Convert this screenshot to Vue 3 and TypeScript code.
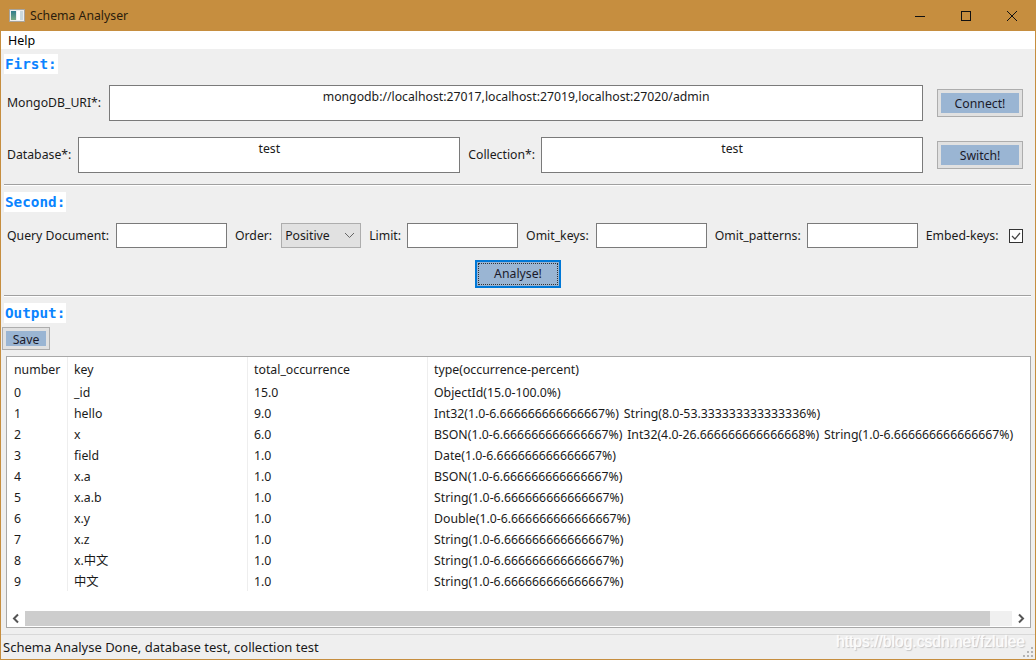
<script setup lang="ts">
interface Row { n: string; k: string; t: string; v: string }
const rows: Row[] = [
  { n: '0', k: '_id', t: '15.0', v: 'ObjectId(15.0-100.0%)' },
  { n: '1', k: 'hello', t: '9.0', v: 'Int32(1.0-6.666666666666667%) String(8.0-53.333333333333336%)' },
  { n: '2', k: 'x', t: '6.0', v: 'BSON(1.0-6.666666666666667%) Int32(4.0-26.666666666666668%) String(1.0-6.666666666666667%)' },
  { n: '3', k: 'field', t: '1.0', v: 'Date(1.0-6.666666666666667%)' },
  { n: '4', k: 'x.a', t: '1.0', v: 'BSON(1.0-6.666666666666667%)' },
  { n: '5', k: 'x.a.b', t: '1.0', v: 'String(1.0-6.666666666666667%)' },
  { n: '6', k: 'x.y', t: '1.0', v: 'Double(1.0-6.666666666666667%)' },
  { n: '7', k: 'x.z', t: '1.0', v: 'String(1.0-6.666666666666667%)' },
  { n: '8', k: 'x.中文', t: '1.0', v: 'String(1.0-6.666666666666667%)' },
  { n: '9', k: '中文', t: '1.0', v: 'String(1.0-6.666666666666667%)' },
]
</script>

<template>
  <div class="window">
    <header class="titlebar">
      <svg class="appicon" width="16" height="13" viewBox="0 0 16 13">
        <defs>
          <linearGradient id="pane" x1="0" y1="0" x2="0" y2="1">
            <stop offset="0" stop-color="#2f7c8c" />
            <stop offset="1" stop-color="#7cab84" />
          </linearGradient>
        </defs>
        <rect x="0.5" y="0.5" width="15" height="12" fill="#eeeeee" stroke="#a8a49c" />
        <rect x="2" y="2" width="5" height="9" fill="url(#pane)" />
        <rect x="8" y="2" width="3" height="9" fill="#ffffff" />
        <rect x="11" y="2" width="3" height="9" fill="#c9d8de" />
      </svg>
      <span class="title">Schema Analyser</span>
      <div class="controls">
        <svg width="46" height="30" viewBox="0 0 46 30"><path d="M18 15.5h10" stroke="#111" fill="none" /></svg>
        <svg width="46" height="30" viewBox="0 0 46 30"><rect x="18.5" y="10.5" width="9" height="9" stroke="#111" fill="none" /></svg>
        <svg width="46" height="30" viewBox="0 0 46 30"><path d="M18 10l10 10M28 10L18 20" stroke="#111" fill="none" /></svg>
      </div>
    </header>
    <nav class="menubar"><span>Help</span></nav>

    <main class="content">
      <div class="heading h-first"><span>First:</span></div>
      <div class="form-row r1">
        <label class="lbl-uri">MongoDB_URI*:</label>
        <div class="tall grow">mongodb://localhost:27017,localhost:27019,localhost:27020/admin</div>
        <button class="btn side">Connect!</button>
      </div>
      <div class="form-row r2">
        <label class="lbl-db">Database*:</label>
        <div class="tall grow">test</div>
        <label class="lbl-col">Collection*:</label>
        <div class="tall grow">test</div>
        <button class="btn side">Switch!</button>
      </div>
      <hr class="sep s1" />

      <div class="heading h-second"><span>Second:</span></div>
      <div class="query-row">
        <label>Query Document:</label><input class="field" />
        <label class="wide">Order:</label>
        <div class="select"><span>Positive</span>
          <svg width="11" height="7" viewBox="0 0 11 7"><path d="M1 1l4.500 4.500L10 1" stroke="#666" fill="none" /></svg>
        </div>
        <label class="tight">Limit:</label><input class="field" />
        <label>Omit_keys:</label><input class="field" />
        <label class="tight">Omit_patterns:</label><input class="field" />
        <label>Embed-keys:</label>
        <div class="check">
          <svg width="14" height="14" viewBox="0 0 14 14"><path d="M3 7l3 3 5-6" stroke="#444" stroke-width="1.200" fill="none" /></svg>
        </div>
      </div>
      <div class="analyse-row">
        <button class="btn analyse"><span>Analyse!</span></button>
      </div>
      <hr class="sep s2" />

      <div class="heading h-output"><span>Output:</span></div>
      <button class="btn save">Save</button>

      <section class="table-box">
        <div class="table-scroll">
          <table>
            <thead>
              <tr><th class="c1">number</th><th class="c2">key</th><th class="c3">total_occurrence</th><th>type(occurrence-percent)</th></tr>
            </thead>
            <tbody>
              <tr v-for="r in rows" :key="r.n">
                <td class="c1">{{ r.n }}</td><td class="c2">{{ r.k }}</td><td class="c3">{{ r.t }}</td><td class="c4">{{ r.v }}</td>
              </tr>
            </tbody>
          </table>
        </div>
        <div class="hscroll">
          <svg class="arrow" width="18" height="15" viewBox="0 0 18 15"><path d="M11 3.500L7 7.500l4 4" stroke="#555" stroke-width="2" fill="none" /></svg>
          <div class="track"><div class="thumb"></div></div>
          <svg class="arrow" width="18" height="15" viewBox="0 0 18 15"><path d="M7 3.500l4 4-4 4" stroke="#555" stroke-width="2" fill="none" /></svg>
        </div>
      </section>
    </main>

    <footer class="statusbar">
      <span>Schema Analyse Done, database test, collection test</span>
      <svg class="grip" width="11" height="11" viewBox="0 0 11 11" fill="#b4b4b4">
        <rect x="8" y="0" width="2" height="2" /><rect x="4" y="4" width="2" height="2" /><rect x="8" y="4" width="2" height="2" />
        <rect x="0" y="8" width="2" height="2" /><rect x="4" y="8" width="2" height="2" /><rect x="8" y="8" width="2" height="2" />
      </svg>
    </footer>
    <div class="watermark">https://blog.csdn.net/fzlulee</div>
  </div>
</template>

<style>
html, body { margin: 0; padding: 0; background: #f0f0f0; }
</style>

<style scoped>
.window {
  position: relative;
  width: 1036px;
  height: 660px;
  box-sizing: border-box;
  border: 1px solid #c68e3f;
  border-top: 0;
  background: #efefef;
  display: flex;
  flex-direction: column;
  overflow: hidden;
  font-family: "Noto Sans", "Noto Sans CJK SC", sans-serif;
  font-size: 12.250px;
  color: #1a1a1a;
}
.titlebar {
  height: 31px;
  flex: none;
  background: #c68e3f;
  display: flex;
  align-items: center;
  padding-left: 8px;
  color: #2a1c0c;
}
.appicon { margin-right: 5px; }
.title { font-size: 12.250px; }
.controls { margin-left: auto; display: flex; }
.controls svg { display: block; }
.menubar {
  height: 18px;
  flex: none;
  background: #fff;
  display: flex;
  align-items: center;
  padding-left: 7px;
  color: #000;
  font-size: 12.500px;
}
.content { flex: 1; display: flex; flex-direction: column; min-height: 0; }
.heading { height: 20px; padding-left: 3px; display: flex; }
.heading span {
  background: #fff;
  color: #0a84ff;
  font-family: "DejaVu Sans Mono", monospace;
  font-weight: 700;
  font-size: 14.300px;
  line-height: 20px;
  padding: 0 1px;
}
.h-first { margin-top: 5px; }
.h-second { margin-top: 6px; }
.h-output { margin-top: 6px; }
.form-row { display: flex; align-items: center; height: 36px; padding-left: 6px; padding-right: 12px; }
.form-row label { padding-bottom: 2px; }
.r1 { margin-top: 11px; }
.r2 { margin-top: 16px; }
.lbl-uri { margin-right: 8px; }
.lbl-db { margin-right: 7px; }
.lbl-col { margin: 0 6px 0 8px; }
.tall {
  box-sizing: border-box;
  height: 36px;
  border: 1px solid #7a7a7a;
  background: #fff;
  text-align: center;
  line-height: 20px;
  padding-top: 1px;
}
.grow { flex: 1 1 0; min-width: 0; }
.btn {
  font: inherit;
  color: #1a1a2a;
  background: #9ab5d3;
  border: 4px solid #e1e1e1;
  outline: 1px solid #adadad;
  outline-offset: -1px;
  box-sizing: border-box;
  padding: 0;
}
.side { width: 86px; height: 28px; flex: none; margin-left: 14px; }
.sep { border: 0; height: 1px; background: #a0a0a0; margin: 10px 4px 0 3px; border-bottom: 1px solid #fff; box-sizing: content-box; }
.s1 { margin-top: 11px; }
.query-row {
  display: flex;
  align-items: center;
  height: 25px;
  margin-top: 11px;
  padding-left: 6px;
  white-space: nowrap;
}
.query-row label { margin-right: 7px; padding-bottom: 1px; }
.query-row label.wide { margin-right: 9px; }
.query-row label.tight { margin-right: 6px; }
.field {
  box-sizing: border-box;
  width: 111px;
  height: 25px;
  border: 1px solid #7a7a7a;
  background: #fff;
  margin-right: 8px;
  padding: 0;
  flex: none;
}
.select {
  box-sizing: border-box;
  width: 80px;
  height: 25px;
  border: 1px solid #adadad;
  background: #e1e1e1;
  margin-right: 8px;
  display: flex;
  align-items: center;
  justify-content: space-between;
  padding: 0 5px 0 3px;
  flex: none;
}
.check {
  box-sizing: border-box;
  width: 14px;
  height: 14px;
  border: 1px solid #333;
  background: #fff;
  margin-left: 3px;
  flex: none;
}
.check svg { display: block; margin: -1px; }
.analyse-row { display: flex; justify-content: center; margin-top: 12px; height: 28px; }
.analyse {
  width: 86px;
  height: 28px;
  border: 2px solid #0078d7;
  outline: none;
  background: #9ab5d3;
  display: flex;
  padding: 1px;
}
.analyse span {
  flex: 1;
  border: 1px dotted #333;
  line-height: 20px;
}
.s2 { margin-top: 7px; }
.save {
  width: 48px;
  height: 23px;
  margin: 4px 0 0 1px;
  flex: none;
}
.table-box {
  box-sizing: border-box;
  height: 272px;
  margin: 6px 4px 0 5px;
  flex: none;
  background: #fff;
  border: 1px solid #a8a8a8;
  display: flex;
  flex-direction: column;
}
.table-scroll { flex: 1; min-height: 0; overflow: hidden; }
table { border-collapse: collapse; table-layout: fixed; width: 1023px; font-size: 12.300px; }
th, td {
  box-sizing: border-box;
  font-weight: 400;
  text-align: left;
  padding: 3px 0 0 6.500px;
  height: 21px;
  line-height: 18px;
  white-space: nowrap;
}
th { height: 24px; padding-top: 2px; line-height: 22px; }
.c1 { width: 60px; padding-left: 7px; border-right: 1px solid #eeeeee; }
.c2 { width: 180px; border-right: 1px solid #eeeeee; }
.c3 { width: 180px; border-right: 1px solid #eeeeee; }
.c4 { word-spacing: 1.500px; }
.hscroll { height: 15px; margin-bottom: 1px; display: flex; align-items: stretch; }
.arrow { flex: none; display: block; }
.track { flex: 1; background: #f0f0f0; }
.thumb { width: 965px; height: 100%; background: #cdcdcd; }
.statusbar {
  position: absolute;
  left: 0;
  right: 0;
  bottom: 0;
  height: 25px;
  box-sizing: border-box;
  border-top: 1px solid #d8d8d8;
  display: flex;
  align-items: center;
  padding-left: 2px;
  background: #efefef;
  font-size: 13px;
}
.grip { position: absolute; right: 1px; bottom: 1px; }
.watermark {
  position: absolute;
  right: 10px;
  bottom: 8px;
  font-family: "Liberation Sans", sans-serif;
  font-size: 15.600px;
  color: #fbfbfb;
  text-shadow: 0 0 1px rgba(255, 255, 255, 0.9), 1px 1px 1px rgba(130, 130, 130, 0.45);
}
</style>
